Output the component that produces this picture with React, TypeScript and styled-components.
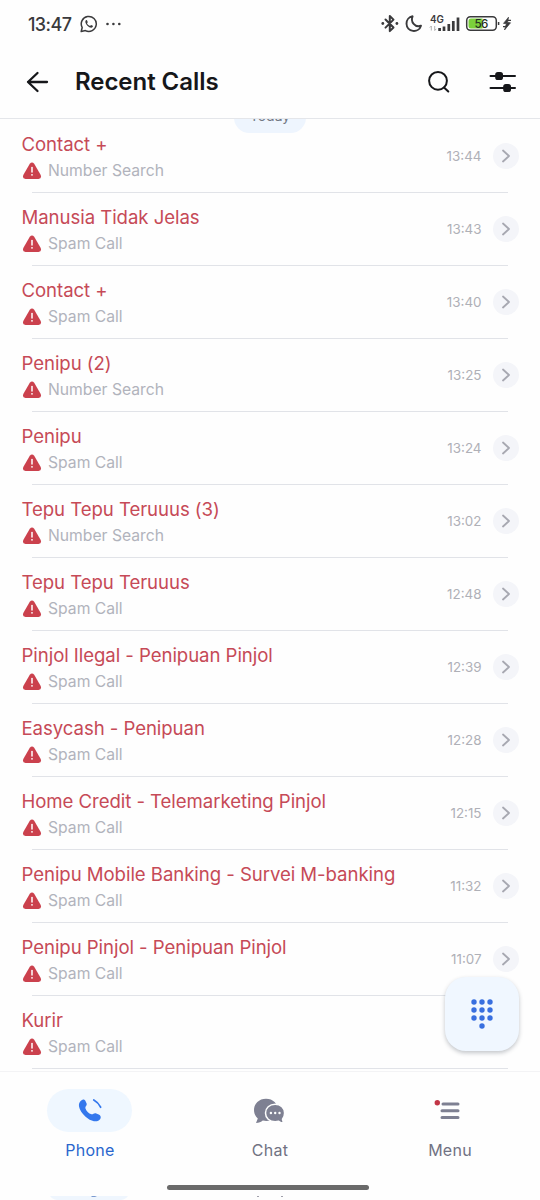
import React from 'react';
import styled, { createGlobalStyle } from 'styled-components';

const GlobalStyle = createGlobalStyle`
  * { box-sizing: border-box; }
  body {
    margin: 0;
    background: #fefefe;
    font-family: Inter, "Liberation Sans", sans-serif;
  }
  svg { display: block; flex: none; }
`;

const Screen = styled.div`
  width: 540px;
  height: 1200px;
  overflow: hidden;
  position: relative;
  display: flex;
  flex-direction: column;
  background: #fefefe;
`;

const StatusBar = styled.div`
  height: 48px;
  flex: none;
  display: flex;
  align-items: center;
  padding: 0 26px 0 28px;
  color: #3a3a3c;
`;

const Clock = styled.span`
  width: 52px;
  font-size: 18px;
  font-weight: 500;
  letter-spacing: -0.6px;
  white-space: nowrap;
`;

const StatusIcons = styled.div`
  margin-left: auto;
  display: flex;
  align-items: center;
  height: 24px;
`;

const Header = styled.header`
  height: 71px;
  flex: none;
  display: flex;
  align-items: center;
  padding: 0 23px 2px 26px;
  border-bottom: 1px solid #e4e6ea;
  color: #16171a;
`;

const Title = styled.h1`
  margin: 0 auto 0 26px;
  font-size: 24px;
  font-weight: 600;
  line-height: 30px;
  letter-spacing: -0.05px;
`;

const CallList = styled.main`
  flex: none;
  height: 952px;
  padding-top: 1px;
  overflow: hidden;
  position: relative;
`;

const DayPill = styled.div`
  position: absolute;
  left: 234px;
  top: -17px;
  width: 72px;
  height: 31px;
  border-radius: 16px;
  background: #eef5fe;
  color: #737985;
  font-size: 14px;
  line-height: 28px;
  text-align: center;
`;

const Row = styled.div`
  height: 73px;
  padding: 0 21.5px 0 21px;
  display: flex;
  align-items: center;
  position: relative;
  &::after {
    content: "";
    position: absolute;
    left: 32px;
    right: 32px;
    bottom: 0;
    height: 1px;
    background: #e1e3e8;
  }
`;

const Info = styled.div`
  flex: 1;
  min-width: 0;
  padding-top: 1px;
`;

const Name = styled.div`
  padding-left: 0.5px;
  font-size: 18.6px;
  line-height: 26px;
  font-weight: 400;
  letter-spacing: -0.06px;
  color: #c64a57;
  white-space: nowrap;
`;

const Detail = styled.div`
  margin-top: 1px;
  display: flex;
  align-items: center;
  gap: 6px;
  font-size: 15.7px;
  line-height: 25px;
  color: #b1b3bc;
  padding-left: 1px;
`;

const Trailing = styled.div`
  display: flex;
  align-items: center;
  padding-bottom: 2px;
`;

const Time = styled.span`
  margin-right: 11px;
  font-size: 13.4px;
  color: #afb0b7;
`;

const Chevron = styled.div`
  width: 26px;
  height: 26px;
  border-radius: 50%;
  background: #f4f5f9;
  display: grid;
  place-items: center;
`;

const DialButton = styled.div`
  position: absolute;
  left: 444.5px;
  top: 977px;
  width: 74px;
  height: 74px;
  border-radius: 21px;
  background: #f0f7ff;
  box-shadow: 0 2px 4px rgba(40, 50, 65, 0.28);
  display: grid;
  place-items: center;
`;

const Nav = styled.nav`
  flex: 1;
  display: grid;
  grid-template-columns: repeat(3, 180px);
  align-content: start;
  padding-top: 17px;
  border-top: 1px solid #f3f3f5;
`;

const NavItem = styled.div<{ $active?: boolean }>`
  display: flex;
  flex-direction: column;
  align-items: center;
  gap: 6px;
  font-size: 16px;
  line-height: 24px;
  font-weight: 400;
  letter-spacing: 0.25px;
  color: ${p => (p.$active ? '#2966cd' : '#717283')};
`;

const NavIcon = styled.div<{ $active?: boolean }>`
  width: 85px;
  height: 43px;
  margin-right: ${p => (p.$active ? 1 : 2)}px;
  border-radius: 22px;
  background: ${p => (p.$active ? '#eff7ff' : 'transparent')};
  display: grid;
  place-items: center;
`;

const HomeBar = styled.div`
  position: absolute;
  left: 167px;
  top: 1185px;
  width: 202px;
  height: 5px;
  border-radius: 3px;
  background: #6a6a6a;
`;

const BottomPeek = styled.svg`
  position: absolute;
  left: 0;
  bottom: 0;
`;

const calls: [string, string, string][] = [
  ['Contact +', 'Number Search', '13:44'],
  ['Manusia Tidak Jelas', 'Spam Call', '13:43'],
  ['Contact +', 'Spam Call', '13:40'],
  ['Penipu (2)', 'Number Search', '13:25'],
  ['Penipu', 'Spam Call', '13:24'],
  ['Tepu Tepu Teruuus (3)', 'Number Search', '13:02'],
  ['Tepu Tepu Teruuus', 'Spam Call', '12:48'],
  ['Pinjol Ilegal - Penipuan Pinjol', 'Spam Call', '12:39'],
  ['Easycash - Penipuan', 'Spam Call', '12:28'],
  ['Home Credit - Telemarketing Pinjol', 'Spam Call', '12:15'],
  ['Penipu Mobile Banking - Survei M-banking', 'Spam Call', '11:32'],
  ['Penipu Pinjol - Penipuan Pinjol', 'Spam Call', '11:07'],
  ['Kurir', 'Spam Call', ''],
];

const Warning = () => (
  <svg width="20" height="18" viewBox="0 0 20 18">
    <path d="M7.800 1.800Q10 -1 12.200 1.800L18.700 13Q20 17 16.500 17H3.500Q0 17 1.300 13Z" fill="#cb414d" />
    <path d="M10 5.500v4.600" stroke="#fff" strokeWidth="1.500" strokeLinecap="round" />
    <circle cx="10" cy="12.800" r=".9" fill="#fff" />
  </svg>
);

const WhatsApp = () => (
  <svg width="18" height="18" viewBox="0 0 18 18" fill="none" stroke="#3a3a3c">
    <path d="M1.200 16.500l1-4A7.500 7.500 0 1 1 5.400 15.600z" strokeWidth="1.500" strokeLinejoin="round" />
    <path d="M6 5.100c-1.500 1.700-.3 4 1.400 5.600 1.800 1.700 4 2.700 5.200 1.300.6-.8.300-1.200-.3-1.500l-1.300-.6-.9 1.100c-1.400-.5-2.500-1.500-3.100-2.800l.8-1-.7-1.800c-.2-.5-.7-.7-1.100-.3z" fill="#3a3a3c" stroke="none" />
  </svg>
);

const Status = () => (
  <svg width="134" height="24" viewBox="380 12 134 24" fill="none" stroke="#3a3a3c">
    <path d="M385.500 19.500l8 8-3.700 3.600V16l3.700 3.600-8 8" strokeWidth="2" strokeLinejoin="round" strokeLinecap="round" />
    <circle cx="382.800" cy="23.500" r="1.400" fill="#3a3a3c" stroke="none" />
    <circle cx="396.900" cy="23.500" r="1.400" fill="#3a3a3c" stroke="none" />
    <path d="M412.600 16.300a7.400 7.400 0 1 0 8.400 9.400c-6 2.400-10.800-4.200-8.400-9.400z" strokeWidth="1.900" strokeLinejoin="round" />
    <text x="430" y="23" fontSize="9.800" fontWeight="600" fill="#3a3a3c" stroke="none">4G</text>
    <path d="M431.300 30.500v-4.500l-1.500 1.600M434.700 26v4.500l1.500-1.600" stroke="#aaa" strokeWidth=".9" />
    <path d="M439.600 28v3M444 26.500v4.500M448.800 24v7M453.300 21v10M458 17.500v13.500" strokeWidth="2.700" />
    <rect x="466.700" y="16.700" width="29.600" height="13.600" rx="3.700" strokeWidth="1.500" />
    <path d="M471 18.500h11.500v10H471q-2.500 0-2.500-2.500v-5q0-2.500 2.500-2.500z" fill="#7bd13b" stroke="none" />
    <path d="M498.600 22v3" strokeWidth="1.500" />
    <text x="474.400" y="27.700" fontSize="11.600" fontWeight="500" letterSpacing="-.6" fill="#263022" stroke="none">56</text>
    <path d="M508.500 17.200l-5 6.200 2.900.2-1.900 6.400 6-7.200-2.900-.4z" fill="#3a3a3c" stroke="#3a3a3c" strokeWidth=".7" strokeLinejoin="round" />
    <path d="M503 26.700h2.700M508 20.300h3" strokeWidth="1.300" />
  </svg>
);

const App = () => (
  <>
    <GlobalStyle />
    <Screen>
      <StatusBar>
        <Clock>13:47</Clock>
        <WhatsApp />
        <svg width="24" height="18" viewBox="0 0 24 18" fill="#3a3a3c">
          <circle cx="9.500" cy="9" r="1.300" />
          <circle cx="15.400" cy="9" r="1.300" />
          <circle cx="21.300" cy="9" r="1.300" />
        </svg>
        <StatusIcons><Status /></StatusIcons>
      </StatusBar>

      <Header>
        <svg width="23" height="22" viewBox="0 0 23 22" fill="none" stroke="#16171a" strokeWidth="2.300" strokeLinecap="round" strokeLinejoin="round">
          <path d="M11.500 2L2 11l9.500 9M2 11h19" />
        </svg>
        <Title>Recent Calls</Title>
        <svg width="24" height="24" viewBox="0 0 24 24" fill="none" stroke="#16171a" strokeWidth="2" strokeLinecap="round">
          <circle cx="11" cy="10.800" r="8.900" />
          <path d="M17 17.500l4.300 4" />
        </svg>
        <svg width="66" height="24" viewBox="0 0 66 24" fill="none" stroke="#16171a" strokeWidth="2" strokeLinecap="round">
          <path d="M39.500 6h24.500M39.500 18h24.500" />
          <rect x="44.200" y="2" width="7.800" height="8" rx="2.600" fill="#16171a" stroke="none" />
          <rect x="52.200" y="14" width="7.800" height="8" rx="2.600" fill="#16171a" stroke="none" />
        </svg>
      </Header>

      <CallList>
        <DayPill>Today</DayPill>
        {calls.map(([name, detail, time], i) => (
          <Row key={i}>
            <Info>
              <Name>{name}</Name>
              <Detail><Warning />{detail}</Detail>
            </Info>
            {time && (
              <Trailing>
                <Time>{time}</Time>
                <Chevron>
                  <svg width="10" height="14" viewBox="0 0 10 14" fill="none" stroke="#a7a8b1" strokeWidth="1.800" strokeLinecap="round" strokeLinejoin="round">
                    <path d="M2 1.500l6 5.500-6 5.500" />
                  </svg>
                </Chevron>
              </Trailing>
            )}
          </Row>
        ))}
      </CallList>

      <Nav>
        <NavItem $active>
          <NavIcon $active>
            <svg width="26" height="26" viewBox="0 0 26 26">
              <path d="M4.600 2.200C6.200 1 7.800 1.500 8.700 3.500l.9 2.100c.7 1.800-1.600 2.900-1.200 4.600.7 2.600 3.400 5.300 6 6.100 1.600.5 2.600-1.700 4.300-1l3 1.200c3.200 1.400 2.300 4.700-.4 6.200C14 26.300 1.800 14.500 1.900 7c0-1.900.9-3.500 2.700-4.800z" fill="#3478ed" />
              <path d="M16.800 2q4.600 2.500 6.800 7.200" fill="none" stroke="#3478ed" strokeWidth="1.800" strokeLinecap="round" />
            </svg>
          </NavIcon>
          Phone
        </NavItem>
        <NavItem>
          <NavIcon>
            <svg width="32" height="26" viewBox="0 0 32 26">
              <path d="M13 .8C6 .8 1 5.700 1 12c0 3.400 1.400 6.300 3.800 8.400L3 25c2.800 0 5.200-1.200 6.800-2.400 10 1.800 15.200-4.200 15.200-10.600C25 5.700 20 .8 13 .8z" fill="#7e8092" />
              <path d="M22.200 6.200c-5.700 0-9.700 3.800-9.700 8.800s4 8.800 9.700 8.800c1.300 0 2.500-.2 3.500-.5 1.200 1 3 1.700 4.800 1.700l-1-3.800c1.300-1.600 2.100-3.700 2.100-6.200 0-5-3.900-8.800-9.400-8.800z" fill="#7e8092" stroke="#fefefe" strokeWidth="1.500" />
              <circle cx="17.900" cy="15" r="1.200" fill="#fff" />
              <circle cx="22.200" cy="15" r="1.200" fill="#fff" />
              <circle cx="26.500" cy="15" r="1.200" fill="#fff" />
            </svg>
          </NavIcon>
          Chat
        </NavItem>
        <NavItem>
          <NavIcon>
            <svg width="32" height="26" viewBox="0 0 32 26">
              <path d="M10 6h15M9 12.800h16M9 19.600h16" stroke="#7e8092" strokeWidth="3" strokeLinecap="round" />
              <circle cx="4.300" cy="4.700" r="2.700" fill="#c23546" />
            </svg>
          </NavIcon>
          Menu
        </NavItem>
      </Nav>

      <DialButton>
        <svg width="22" height="30" viewBox="0 0 22 30" fill="#386fdf">
          {[3, 11, 19].map(y => [3, 11, 19].map(x => <circle key={`${x}-${y}`} cx={x} cy={y} r="2.700" />))}
          <circle cx="11" cy="27" r="2.700" />
        </svg>
      </DialButton>

      <HomeBar />
      <BottomPeek width="540" height="4" viewBox="0 0 540 4">
        <path d="M50 0h78q-2 3-7 4H57q-5-1-7-4z" fill="#eff6fe" />
        <path d="M91 0h6l-2 1h-3z" fill="#7c9bd0" />
        <path d="M257 0h2M281 0h2" stroke="#a0a0ab" strokeWidth="2" />
      </BottomPeek>
    </Screen>
  </>
);

export default App;
